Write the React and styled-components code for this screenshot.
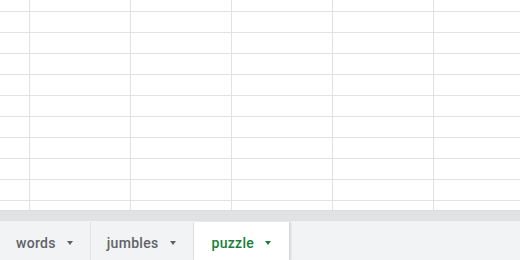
import React from 'react'
import styled, { createGlobalStyle } from 'styled-components'

const GlobalStyle = createGlobalStyle`
  html, body {
    margin: 0;
    padding: 0;
    background: #ffffff;
    overflow: hidden;
  }
  body {
    font-family: Roboto, "Open Sans", Arial, sans-serif;
  }
`

const Page = styled.div`
  width: 520px;
  height: 260px;
  display: flex;
  flex-direction: column;
  overflow: hidden;
`

const Grid = styled.div`
  height: 210px;
  display: grid;
  grid-template-columns: 30px repeat(5, 101px);
  grid-template-rows: 12px repeat(9, 21px) 9px;
  overflow: hidden;
  border-bottom: 1px solid #dcdcdc;
`

const Cell = styled.div`
  border-right: 1px solid #e2e2e2;
  border-bottom: 1px solid #e2e2e2;
  background: #ffffff;
  &:nth-last-child(-n + 6) {
    border-bottom: none;
  }
`

const ScrollBar = styled.div`
  height: 10px;
  background: #e1e2e3;
`

const TabBar = styled.div`
  flex: 1;
  display: flex;
  align-items: stretch;
  background: #f1f3f4;
  padding-top: 1px;
`

const Tab = styled.div`
  display: flex;
  align-items: center;
  gap: 11px;
  padding: 3px ${p => (p.$active ? '18px' : '17px')} 0 ${p => (p.$active ? '18px' : '16px')};
  background: ${p => (p.$active ? '#ffffff' : 'transparent')};
  border-right: 1px solid ${p => (p.$active ? '#d4d6d9' : '#e0e2e5')};
  box-shadow: ${p => (p.$active ? '1px 0 2px rgba(60,64,67,0.15)' : 'none')};
  color: ${p => (p.$active ? '#188038' : '#5f6368')};
  font-size: 14px;
  font-weight: 500;
  letter-spacing: 0.3px;
`

const Caret = styled.span`
  width: 0;
  height: 0;
  border-left: 3.5px solid transparent;
  border-right: 3.5px solid transparent;
  border-top: 4px solid currentColor;
  margin-top: 1px;
`

const tabs = [
  { name: 'words' },
  { name: 'jumbles' },
  { name: 'puzzle', active: true },
]

const App = () => {
  const cells = []
  for (let i = 0; i < 11 * 6; i++) cells.push(<Cell key={i} />)

  return (
    <Page>
      <GlobalStyle />
      <Grid>{cells}</Grid>
      <ScrollBar />
      <TabBar>
        {tabs.map(tab => (
          <Tab key={tab.name} $active={tab.active}>
            {tab.name}
            <Caret />
          </Tab>
        ))}
      </TabBar>
    </Page>
  )
}

export default App
